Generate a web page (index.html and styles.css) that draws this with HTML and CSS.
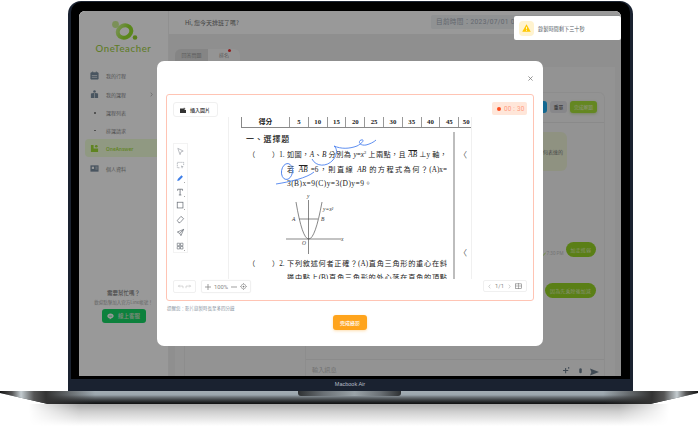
FILE: index.html
```html
<!DOCTYPE html>
<html lang="zh-Hant">
<head>
<meta charset="utf-8">
<title>OneTeacher</title>
<link rel="stylesheet" href="styles.css">
</head>
<body>
<div class="stage">
  <div class="lid">
    <div class="bezel">
      <div class="screen">
        <aside class="sidebar">
          <div class="brand">
            <svg class="logo" viewBox="0 0 30 20" width="30" height="20">
              <defs><linearGradient id="ring" x1="0" y1="0" x2="1" y2="1"><stop offset="0" stop-color="#cdf58f"/><stop offset=".6" stop-color="#98e22f"/></linearGradient></defs>
              <ellipse cx="15.500" cy="10.500" rx="7" ry="6" transform="rotate(-25 15.500 10.500)" fill="none" stroke="url(#ring)" stroke-width="4"/>
              <circle cx="6.500" cy="3.500" r="3.400" fill="#cdf093"/>
              <circle cx="26" cy="16.500" r="2.300" fill="#95d22e"/>
            </svg>
            <div class="brand-name">OneTeacher</div>
          </div>
          <nav class="nav">
            <div class="nav-item">
              <svg class="nav-icon" viewBox="0 0 10 10"><path d="M1 2h8v7H1zM3 .5v2M7 .5v2" fill="#7b8ea0" stroke="#7b8ea0"/><path d="M2 5h6M2 7h6" stroke="#fff" stroke-width=".7"/></svg>
              <span>我的行程</span>
            </div>
            <div class="nav-item">
              <svg class="nav-icon" viewBox="0 0 10 10"><path d="M1 4l4-1 4 1v5H1z" fill="#7b8ea0"/><circle cx="5" cy="1.700" r="1.400" fill="#7b8ea0"/><path d="M5 3v6" stroke="#fff" stroke-width=".6"/></svg>
              <span>我的課程</span>
              <svg class="chev" viewBox="0 0 4 6" width="3" height="5"><path d="M1 .5L3 3 1 5.500" fill="none" stroke="#8e8e8e" stroke-width=".7"/></svg>
            </div>
            <div class="nav-sub"><i class="bullet"></i><span>課程列表</span></div>
            <div class="nav-sub"><i class="bullet"></i><span>排課請求</span></div>
            <div class="nav-item active">
              <svg class="nav-icon" viewBox="0 0 10 10"><path d="M1 1h3v4h5v4H1z" fill="#9fdc36"/><circle cx="7" cy="2.500" r="1.500" fill="#9fdc36"/></svg>
              <span>OneAnswer</span>
            </div>
            <div class="nav-item profile">
              <svg class="nav-icon" viewBox="0 0 10 10"><rect x=".5" y="1.500" width="9" height="7" fill="#7b8ea0"/><rect x="2" y="3" width="2.500" height="2.500" fill="#fff"/><path d="M6 3.500h2.500M6 5.500h2.500" stroke="#fff" stroke-width=".7"/></svg>
              <span>個人資料</span>
            </div>
          </nav>
          <div class="help">
            <div class="help-title">需要幫忙嗎？</div>
            <div class="help-text">歡迎點擊加入官方Line帳號！</div>
            <div class="line-btn">
              <svg viewBox="0 0 10 10" width="7" height="7"><path d="M5 .8C2.400.8.500 2.400.500 4.400c0 1.800 1.500 3.200 3.600 3.500l-.2 1.400 2-1.400c1.900-.5 3.600-1.800 3.600-3.500C9.500 2.400 7.600.8 5 .8z" fill="#fff"/><path d="M2.700 4.400h4.600" stroke="#0fd060" stroke-width=".9"/></svg>
              <span>線上客服</span>
            </div>
          </div>
        </aside>
        <main class="main">
          <header class="topbar">
            <div class="greeting">Hi, 您今天排班了嗎?</div>
            <div class="clock">目前時間：2023/07/01 09:00</div>
          </header>
          <div class="content">
            <div class="tabs">
              <div class="tab tab-on">回答問題</div>
              <div class="tab">排名<i class="tab-dot"></i></div>
            </div>
            <section class="panel">
              <div class="board">
                <div class="list-col"></div>
                <div class="chat-col">
                  <div class="chat-tools">
                    <div class="cbtn cbtn-blue">邀請</div>
                    <div class="cbtn cbtn-gray">重單</div>
                    <div class="cbtn cbtn-green">完成解題</div>
                  </div>
                  <div class="messages">
                    <div class="bubble-in">我不太懂這題該如何表達的</div>
                    <div class="msg-row first">
                      <span class="stamp"><svg viewBox="0 0 6 6" width="4" height="4"><path d="M.5 3.500l1.500 1.500L5.500 1" fill="none" stroke="#9fdc36" stroke-width="1"/></svg>7:30 PM</span>
                      <div class="bubble-out">加走巡弱</div>
                    </div>
                    <div class="msg-row second">
                      <div class="bubble-out">因為先乘除後加減</div>
                    </div>
                  </div>
                  <div class="composer">
                    <span class="composer-hint">輸入訊息</span>
                    <svg class="c-ic" viewBox="0 0 8 8" width="7" height="7"><path d="M3 1v6M0 4h6M6.500 0v2" stroke="#6b7c8c" stroke-width="1.200"/></svg>
                    <svg class="c-ic mic" viewBox="0 0 6 8" width="5" height="7"><rect x="1.500" y="0" width="3" height="6" rx="1.500" fill="#6b7c8c"/></svg>
                    <svg class="c-send" viewBox="0 0 10 8" width="9" height="8"><path d="M0 0l10 4-10 4 1.500-4z" fill="#6b7c8c"/></svg>
                  </div>
                </div>
              </div>
            </section>
          </div>
        </main>
        <div class="overlay"></div>
        <div class="toast">
          <div class="toast-icon">
            <svg viewBox="0 0 10 9" width="9" height="8"><path d="M5 .3L9.800 8.700H.2z" fill="#ffc800"/><path d="M5 3.200v2.800M5 6.800v.9" stroke="#fff" stroke-width=".9"/></svg>
          </div>
          <span>錄製時間剩下三十秒</span>
        </div>
        <div class="modal">
          <svg class="close" viewBox="0 0 6 6" width="5" height="5"><path d="M.5.5l5 5M5.500.5l-5 5" stroke="#777" stroke-width=".9"/></svg>
          <div class="card">
            <div class="card-top">
              <div class="insert">
                <svg viewBox="0 0 8 8" width="6" height="6"><path d="M0 2h5v-1h1v1h1v1H6v1h2v4H0z" fill="#333"/></svg>
                <span>插入圖片</span>
              </div>
              <div class="timer"><i class="rec"></i><span>00 : 30</span></div>
            </div>
            <div class="card-mid">
              <div class="tools">
                <svg class="tool" viewBox="0 0 10 10"><path d="M2 1.500l6 3-2.500 1L4.500 8.500z" fill="none" stroke="#a0a5ac" stroke-width=".8"/></svg>
                <svg class="tool" viewBox="0 0 10 10"><path d="M8.500 4.500v-3h-7v6h3" fill="none" stroke="#a0a5ac" stroke-width=".8" stroke-dasharray="1.500 .6"/><path d="M5.500 5l3 1.500-1.300.5-.5 1.500z" fill="#a0a5ac"/></svg>
                <svg class="tool" viewBox="0 0 11 11"><path d="M1.500 8.500l.7-2.500 4.500-4.500 1.800 1.800L4 8z" fill="#3f7fe8"/><path d="M10 10h1v1h-1z" fill="#777"/></svg>
                <svg class="tool" viewBox="0 0 11 11"><path d="M2 1.500h6v1.800M5 1.500v7M3.500 8.500h3M2 1.500v1.800" fill="none" stroke="#6a7078" stroke-width="1"/><path d="M10 10h1v1h-1z" fill="#777"/></svg>
                <svg class="tool" viewBox="0 0 11 11"><rect x="1.500" y="1.500" width="7" height="7" fill="none" stroke="#6a7078" stroke-width=".9"/><path d="M10 10h1v1h-1z" fill="#777"/></svg>
                <svg class="tool" viewBox="0 0 10 10"><path d="M1.500 6l4-4.500 3 2.500-4 4.500H3z" fill="none" stroke="#6a7078" stroke-width=".8"/></svg>
                <svg class="tool" viewBox="0 0 10 10"><path d="M1.500 4.500l7-3-3 7-1.300-2.500zM8.500 1.500L4.200 6" fill="none" stroke="#6a7078" stroke-width=".8"/></svg>
                <svg class="tool" viewBox="0 0 11 11"><path d="M1.500 1.500h3v3h-3zM5.500 1.500h3v3h-3zM1.500 5.500h3v3h-3zM5.500 5.500h3v3h-3z" fill="none" stroke="#6a7078" stroke-width=".8"/><path d="M10 10h1v1h-1z" fill="#777"/></svg>
              </div>
              <div class="doc">
                <div class="score">
                  <div class="cell">得分</div><div class="cell">5</div><div class="cell">10</div><div class="cell">15</div><div class="cell">20</div><div class="cell">25</div><div class="cell">30</div><div class="cell">35</div><div class="cell">40</div><div class="cell">45</div><div class="cell cell-end">50</div>
                </div>
                <div class="paper">
                  <div class="paper-text">
                    <div class="heading">一、選擇題</div>
                    <div class="q"><span>（</span><span>）1.</span><span class="just">如圖，<i>A</i>、<i>B</i> 分別為 <i>y</i>=<i>x</i><sup>2</sup> 上兩點，且 <span class="ol"><i>AB</i></span> ⊥y 軸，</span></div>
                    <div class="q"><span></span><span></span><span class="just">若 <span class="ol"><i>AB</i></span> =6，則直線 <i>AB</i> 的方程式為何？(A)x=</span></div>
                    <div class="q"><span></span><span></span><span class="plain">3(B)x=9(C)y=3(D)y=9。</span></div>
                    <svg class="figure" viewBox="0 0 225 65" width="225" height="65">
                      <path d="M57 47h55" stroke="#555" stroke-width=".7"/>
                      <path d="M79.500 8v54" stroke="#555" stroke-width=".7"/>
                      <path d="M67 10Q79.500 84 93 10" fill="none" stroke="#555" stroke-width=".7"/>
                      <path d="M70 27h19" stroke="#555" stroke-width=".7"/>
                      <text x="78" y="6" class="fig-t">y</text>
                      <text x="94" y="19" class="fig-t">y=x²</text>
                      <text x="63" y="29" class="fig-t">A</text>
                      <text x="92" y="29" class="fig-t">B</text>
                      <text x="73" y="53" class="fig-t">O</text>
                      <text x="112" y="49" class="fig-t">x</text>
                    </svg>
                    <div class="q"><span>（</span><span>）2.</span><span class="just">下列敘述何者正確？(A)直角三角形的重心在斜</span></div>
                    <div class="q"><span></span><span></span><span class="just">邊中點上(B)直角三角形的外心落在直角的頂點</span></div>
                  </div>
                  <div class="gutter"><span>〈</span><span>〈</span></div>
                </div>
                <svg class="ink" viewBox="229 117 244 162" width="244" height="162">
                  <ellipse cx="288" cy="171.500" rx="5.500" ry="8" transform="rotate(8 288 171.500)" fill="none" stroke="#4d82ee" stroke-width=".9"/>
                  <path d="M277 184C290 182 308 178 315 172" fill="none" stroke="#4d82ee" stroke-width=".9"/>
                  <path d="M313 159C317 167 328 167 334 160C339 154 338 148 335 146C342 149 350 149 358 146C364 143 366 139 362 140C359 141 360 146 367 145C371 144 375 142 377 140" fill="none" stroke="#4d82ee" stroke-width=".9"/>
                </svg>
              </div>
            </div>
            <div class="card-bot">
              <div class="ctl undo">
                <svg viewBox="0 0 8 6" width="7" height="5"><path d="M7 5V2.500H1.500M3 1L1.500 2.500 3 4" fill="none" stroke="#bcbcbc" stroke-width=".7"/></svg>
                <svg viewBox="0 0 8 6" width="7" height="5"><path d="M1 5V2.500h5.500M5 1l1.500 1.500L5 4" fill="none" stroke="#bcbcbc" stroke-width=".7"/></svg>
              </div>
              <div class="ctl zoombox">
                <svg viewBox="0 0 6 6" width="6" height="6"><path d="M3 0v6M0 3h6" stroke="#777" stroke-width=".7"/></svg>
                <span>100%</span>
                <svg viewBox="0 0 6 6" width="6" height="6"><path d="M0 3h6" stroke="#777" stroke-width=".7"/></svg>
                <svg viewBox="0 0 8 8" width="7" height="7"><circle cx="4" cy="4" r="2.700" fill="none" stroke="#777" stroke-width=".6"/><circle cx="4" cy="4" r="1" fill="#777"/><path d="M4 0v1.200M4 6.800V8M0 4h1.200M6.800 4H8" stroke="#777" stroke-width=".6"/></svg>
              </div>
              <div class="ctl pager">
                <svg viewBox="0 0 4 6" width="3" height="5"><path d="M3 .5L1 3l2 2.500" fill="none" stroke="#aaa" stroke-width=".7"/></svg>
                <span>1/1</span>
                <svg viewBox="0 0 4 6" width="3" height="5"><path d="M1 .5L3 3 1 5.500" fill="none" stroke="#aaa" stroke-width=".7"/></svg>
                <svg viewBox="0 0 8 7" width="7" height="6"><rect x=".4" y="1" width="7.200" height="5.600" fill="none" stroke="#777" stroke-width=".7"/><path d="M4 0v7M.4 3.500h7.200" stroke="#777" stroke-width=".6"/></svg>
              </div>
            </div>
          </div>
          <div class="caption">提醒您：影片錄製時長至多四分鐘</div>
          <div class="finish">完成錄影</div>
        </div>
      </div>
    </div>
    <div class="chin">Macbook Air</div>
  </div>
  <div class="base"><div class="notch"></div></div>
  <div class="floor"></div>
</div>
</body>
</html>
```

FILE: styles.css
```css
* { box-sizing: border-box; }
html, body { margin: 0; padding: 0; background: #fff; }
body { width: 698px; height: 428px; overflow: hidden; font-family: "Noto Sans CJK TC", "Noto Sans", sans-serif; }
i { font-style: normal; }

.stage { width: 698px; height: 428px; padding-top: 1px; filter: blur(0.45px); }

/* laptop */
.lid { width: 565px; height: 390px; margin-left: 68px; padding: 1px 3px 0; background: #1a2230; border-radius: 13px 13px 0 0; display: flex; flex-direction: column; }
.bezel { height: 377px; padding: 9px 8px 3px; background: #000; border-radius: 10px 10px 0 0; }
.screen { position: relative; width: 542px; height: 365px; display: flex; overflow: hidden; border-radius: 6px 6px 0 0; background: #eee; }
.chin { flex: 1; text-align: center; color: #b8bec6; font: 5.5px/11px "Liberation Sans", sans-serif; padding-right: 1px; }
.base { position: relative; width: 698px; height: 13px; background: linear-gradient(90deg, #111 0, #555 12px, #c4ccd0 21px, #555 34px, #333 46px, rgba(90,100,105,0) 95px, rgba(90,100,105,0) 603px, #333 652px, #555 664px, #c4ccd0 677px, #555 686px, #111 698px), linear-gradient(180deg, #a3adb4 0, #9aa5ac 4px, #6f767b 6px, #3c4043 9px, #151719 12px, #111 13px); clip-path: polygon(0 0, 698px 0, 698px 2px, 650px 13px, 48px 13px, 0 2px); }
.notch { width: 103px; height: 5px; margin-left: 298px; border-radius: 0 0 3px 3px; background: linear-gradient(90deg, #2e3133 0, #6a7075 25%, #9aa3a8 55%, #6a7075 80%, #2e3133 100%); }
.floor { width: 640px; height: 22px; margin-left: 29px; background: linear-gradient(180deg, #a8a8a8 0, #cfcfcf 35%, #fff 100%); -webkit-mask-image: linear-gradient(90deg, transparent 0, #000 50px, #000 590px, transparent 100%); mask-image: linear-gradient(90deg, transparent 0, #000 50px, #000 590px, transparent 100%); }

/* sidebar */
.sidebar { width: 90px; flex: none; background: #fff; display: flex; flex-direction: column; border-right: 1px solid #f0f0f0; }
.brand { height: 55px; padding-top: 10px; display: flex; flex-direction: column; align-items: center; }
.logo { display: block; margin-left: 1px; }
.brand-name { margin-top: 1px; font: 500 9.600px/13px "Lato", sans-serif; letter-spacing: .6px; color: #9fd043; }
.nav { display: flex; flex-direction: column; }
.nav-item, .nav-sub { display: flex; align-items: center; font-size: 5px; color: #8e8e8e; }
.nav-item { height: 19px; padding-left: 11px; }
.nav-sub { height: 17.5px; padding-left: 27px; }
.nav-icon { width: 9px; height: 9px; margin-right: 7px; flex: none; }
.chev { margin-left: 24px; }
.bullet { width: 1.500px; height: 1.500px; margin-left: -12px; margin-right: 10.500px; background: #777; border-radius: 50%; }
.active { height: 18px; margin: 0 6px; padding-left: 5px; color: #9fdc36; font-weight: 500; background: #f1ffd9; border-radius: 4px; }
.active .nav-icon { margin-right: 7px; }
.profile { margin-top: 2px; }
.help { margin-top: auto; padding-bottom: 53px; display: flex; flex-direction: column; align-items: center; }
.help-title { font-size: 5.500px; line-height: 8px; font-weight: 500; color: #7e7e7e; }
.help-text { font-size: 4.500px; line-height: 9px; color: #b0b0b0; margin-top: 1px; }
.line-btn { width: 44px; height: 14px; margin-top: 2px; background: #17d766; border-radius: 3px; display: flex; align-items: center; justify-content: center; gap: 4px; color: #d7e6d2; font-size: 5.500px; font-weight: 500; }

/* main */
.main { flex: 1; display: flex; flex-direction: column; min-width: 0; }
.topbar { height: 27px; background: #fff; display: flex; align-items: center; justify-content: space-between; padding: 0 0 1px 16px; }
.greeting { font-size: 6px; color: #6e6e6e; }
.clock { width: 190px; height: 14px; padding-left: 5px; font: 6.600px/14px "Roboto", "Noto Sans CJK TC", sans-serif; letter-spacing: .32px; color: #a6aeb8; background: #f0f3f6; border-radius: 2px; }
.content { flex: 1; padding: 15px 6px 0; display: flex; flex-direction: column; }
.tabs { display: flex; height: 18px; }
.tab { width: 32px; padding-top: 2px; text-align: center; position: relative; font-size: 5px; color: #999; background: #f7f7f7; border-radius: 0 6px 0 0; }
.tab-on { width: 33px; background: #dedede; border-radius: 6px 0 0 0; }
.tab-dot { position: absolute; top: 0; right: 9px; width: 3px; height: 3px; background: #f03030; border-radius: 50%; }
.panel { flex: 1; background: #f5f5f5; padding: 25px 10px 0 9px; display: flex; }
.board { flex: 1; display: grid; grid-template-columns: 121px 1fr; border: 1px solid #ececec; border-bottom: 0; border-radius: 6px 6px 0 0; }
.list-col { border-right: 1px solid #ececec; }
.chat-col { display: flex; flex-direction: column; }
.chat-tools { height: 30px; flex: none; padding: 8px 7px 0 0; display: flex; justify-content: flex-end; gap: 3px; border-bottom: 1px solid #e6e6e6; }
.cbtn { height: 12px; border-radius: 3px; font-size: 4.800px; line-height: 12px; text-align: center; }
.cbtn-blue { width: 24px; background: #22aef0; color: #fff; }
.cbtn-gray { width: 17px; background: #e2e2e6; color: #444; }
.cbtn-green { width: 27px; background: #a7e237; color: #e8f5cc; box-shadow: 0 1px 3px rgba(130,190,40,.4); }
.messages { height: 236px; flex: none; padding: 9px 8px 0 14px; display: flex; flex-direction: column; }
.bubble-in { width: 237px; height: 39px; margin-right: auto; margin-left: 10px; padding: 15px 4px 0 0; text-align: right; background: #eef3d8; border-radius: 6px; font-size: 5px; line-height: 9px; color: #7a7a7a; }
.msg-row { display: flex; justify-content: flex-end; align-items: flex-end; gap: 2px; }
.first { margin-top: 71px; }
.second { margin-top: 26px; }
.stamp { font: 4.600px/7px "Roboto", sans-serif; color: #c2c2c2; display: flex; align-items: center; gap: 1px; }
.bubble-out { height: 15px; padding: 0 5px; background: #96d426; border-radius: 7.500px; color: #dff0bb; font-size: 5px; line-height: 15px; letter-spacing: .12px; }
.composer { flex: 1; padding: 5px 0 0 6px; border-top: 1px solid #e8e8e8; display: flex; align-items: flex-start; font-size: 6.200px; color: #bdbdbd; position: relative; }
.composer-hint { line-height: 9px; margin-right: auto; }
.c-ic { margin-top: 2px; }
.mic { margin: 3px 7px 0 8px; }
.c-send { margin: 3px 5px 0 0; }

/* overlay pieces */
.overlay { position: absolute; inset: 0; background: rgba(0,0,0,.4); }
.toast { position: absolute; right: 0; top: 5px; width: 107px; height: 24px; padding-left: 5px; background: #fff; border-radius: 2px; display: flex; align-items: center; gap: 4px; font-size: 5.200px; color: #555c66; }
.toast-icon { width: 15px; height: 15px; border-radius: 4px; background: #fff3cf; display: flex; align-items: center; justify-content: center; }
.modal { position: absolute; left: 78px; top: 50px; width: 386px; height: 285px; padding: 33px 9px 0; background: #fff; border-radius: 7px; }
.close { position: absolute; top: 15px; right: 10px; }
.card { height: 207px; padding: 7px 6px 0; border: 1px solid #ffc4b4; border-radius: 3px; }
.card-top { height: 15px; display: flex; justify-content: space-between; align-items: flex-start; }
.insert { width: 45px; height: 15px; padding-left: 6px; border: 1px solid #f0f0f0; border-radius: 3px; display: flex; align-items: center; gap: 4px; font-size: 5px; font-weight: 500; color: #333; }
.timer { width: 35px; height: 13px; background: #ffe6d9; border-radius: 2px; padding-left: 5px; display: flex; align-items: center; gap: 3px; font: 6.400px "Roboto", sans-serif; letter-spacing: .2px; color: #ff9c82; }
.rec { width: 4px; height: 4px; background: #ff4d1f; border-radius: 50%; }
.card-mid { display: flex; align-items: flex-start; height: 162px; }
.tools { width: 15px; height: 110px; margin-top: 26px; padding-top: 3px; border: 1px solid #f3f3f3; display: flex; flex-direction: column; align-items: center; gap: 4.500px; }
.tool { width: 9px; height: 9px; flex: none; }
.doc { position: relative; width: 244px; height: 162px; margin-left: 40px; padding-left: 13px; overflow: hidden; border-left: 1px solid #f0f0f0; border-right: 1px solid #f0f0f0; font-family: "Liberation Serif", "Noto Sans CJK TC", serif; color: #222; }
.score { display: grid; grid-template-columns: 48px repeat(9, 18.800px) 14px; height: 11px; border-bottom: 1px solid #888; border-left: 1px solid #888; margin-left: -1px; }
.cell { font-size: 6.800px; line-height: 9px; text-align: center; font-weight: 700; border-right: 1px solid #999; font-family: "Liberation Serif", "Noto Sans CJK TC", serif; }
.cell-end { border-right: 0; }
.paper { display: flex; margin: 4px 0 0 -13px; }
.paper-text { width: 226px; height: 147px; flex: none; padding-left: 19px; border-right: 2px solid #bdbdbd; }
.heading { height: 16px; font-size: 8px; line-height: 14px; font-weight: 500; margin-left: -2px; letter-spacing: .8px; font-family: "Noto Sans CJK TC", sans-serif; }
.q { display: grid; grid-template-columns: 24px 15px 160px; height: 14.600px; font-size: 7.200px; line-height: 14px; white-space: nowrap; font-family: "Liberation Serif", "Noto Sans CJK TC", serif; font-weight: 400; }
.q sup { font-size: 4.500px; line-height: 0; }
.q i { font-style: italic; }
.just { display: block; text-align: justify; text-align-last: justify; white-space: normal; height: 14px; overflow: hidden; }
.plain { letter-spacing: .42px; font-size: 7.500px; }
.ol { text-decoration: overline; }
.figure { display: block; margin-left: -19px; }
.fig-t { font: italic 5.500px "Liberation Serif", serif; fill: #333; }
.gutter { flex: 1; height: 147px; padding-top: 16px; display: flex; flex-direction: column; gap: 84px; color: #555; font-size: 8px; line-height: 14px; font-family: "Noto Sans CJK TC", sans-serif; text-indent: 4px; }
.ink { position: absolute; top: 0; left: -1px; pointer-events: none; }
.card-bot { display: flex; align-items: flex-start; margin-top: 1px; }
.ctl { height: 13px; border: 1px solid #f0f0f0; border-radius: 2px; display: flex; align-items: center; justify-content: space-around; font: 5.800px "Roboto", sans-serif; color: #888; }
.undo { width: 23px; padding: 0 2px; }
.zoombox { width: 50px; margin-left: 5px; padding: 0 2px; box-shadow: 0 0 1px rgba(0,0,0,.08); }
.pager { width: 44px; height: 12px; margin-left: auto; padding: 0 2px; }
.caption { margin-top: 3px; font-size: 4.500px; line-height: 8px; color: #8c96a3; margin-left: 1px; }
.finish { width: 34px; height: 15px; margin: 3px 0 0 167px; background: #ffa41c; border-radius: 3px; color: #fff; font-size: 5px; font-weight: 500; line-height: 15px; text-align: center; box-shadow: 0 1px 3px rgba(255,164,28,.35); }
```
